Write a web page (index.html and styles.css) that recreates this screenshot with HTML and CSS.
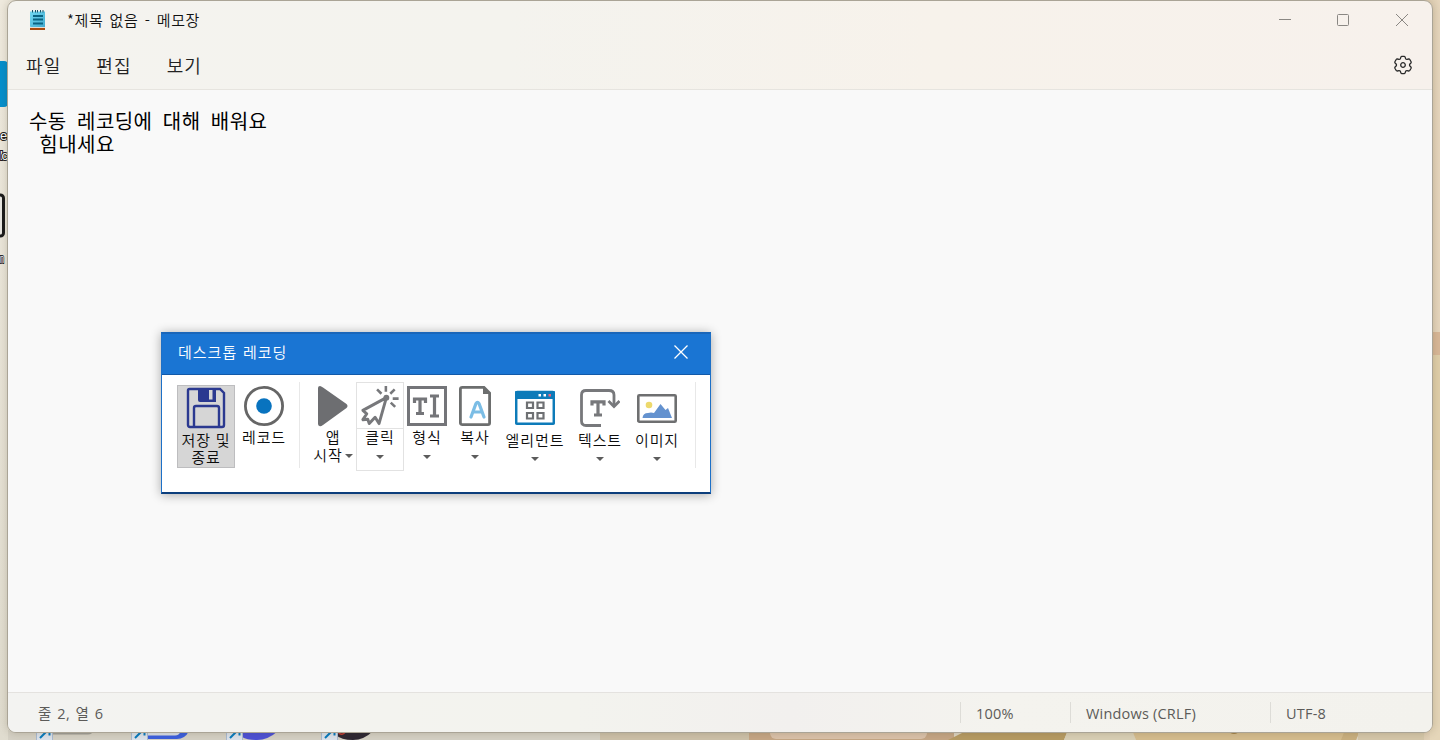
FILE: index.html
```html
<!DOCTYPE html>
<html lang="ko">
<head>
<meta charset="utf-8">
<title>메모장</title>
<link rel="stylesheet" href="styles.css">
</head>
<body>
<svg class="desktop" width="1440" height="740" viewBox="0 0 1440 740">
  <defs>
    <linearGradient id="left" x1="0" x2="0" y1="0" y2="1"><stop offset="0" stop-color="#efeade"/><stop offset="1" stop-color="#e0dccf"/></linearGradient>
    <linearGradient id="right" x1="0" x2="1" y1="0" y2="0"><stop offset="0" stop-color="#dccbb0"/><stop offset="1" stop-color="#e6d6bd"/></linearGradient>
  </defs>
  <rect width="20" height="740" fill="url(#left)"/>
  <rect x="1420" width="20" height="740" fill="url(#right)"/>
  <rect x="1430" y="332" width="10" height="23" fill="#d8b797"/>
  <rect x="1430" y="355" width="10" height="115" fill="#dfcea9"/>
  <rect x="1430" y="470" width="10" height="270" fill="#e5d6b9"/>
  <rect x="-20" y="61" width="28" height="46" rx="4" fill="#058fcd"/>
  <rect x="-20" y="195" width="23.500" height="41" rx="3" fill="#e9e7e2" stroke="#1b1b1b" stroke-width="3"/>
  <g class="desk-label"><text x="0" y="140">e</text><text x="0" y="160" textLength="8">lc</text><text x="0" y="263" textLength="4" lengthAdjust="spacingAndGlyphs">n</text></g>
  <rect x="8" y="730" width="592" height="10" fill="#d5d1c5"/>
  <rect x="600" y="730" width="149" height="10" fill="#cdc1a9"/>
  <rect x="749" y="730" width="205" height="10" fill="#c5a685"/>
  <rect x="770" y="715" width="157" height="24" rx="6" fill="#dac2aa"/>
  <path d="M948 740L968 730H1068L1064 740Z" fill="#b69b63"/>
  <path d="M1064 740L1068 730H1132L1136 740Z" fill="#d9d0b6"/>
  <path d="M1136 740L1132 730H1360L1356 740Z" fill="#d5bd8f"/>
  <path d="M1341 740L1345 730H1360L1356 740Z" fill="#c9b080"/>
  <rect x="1358" y="730" width="66" height="10" fill="#d5c7aa"/>
  <ellipse cx="1234" cy="731" rx="5" ry="3" fill="#a4834a"/>
  <path d="M52 731H93Q92 734.500 88 734.500H52Z" fill="#a19f98"/>
  <path d="M146 731H189Q185 739 177 739H146Z" fill="#3b5fde"/><path d="M146 731H181Q179 735.500 175 735.500H146Z" fill="#dbe0e8"/>
  <path d="M242 731H278Q268 740 257 740Q247 740 242 737Z" fill="#4d51d6"/>
  <path d="M336 731H373Q364 740 353 740Q341 740 336 735Z" fill="#2d2733"/><path d="M338 732Q342 737 346 731" fill="none" stroke="#c33b32" stroke-width="1.500"/>
  <g fill="#dce3ec" stroke="#a9bad2"><path d="M36.500 730H52.500V740.500H36.500zM131.500 730H147.500V740.500H131.500zM226.500 730H242.500V740.500H226.500zM321.500 730H337.500V740.500H321.500z"/></g>
  <g fill="none" stroke="#087bbf" stroke-width="2"><path d="M40 738L49 729M49.500 729V735.500M135 738L144 729M144.500 729V735.500M230 738L239 729M239.500 729V735.500M325 738L334 729M334.500 729V735.500"/></g>
</svg>

<main class="notepad">
  <header class="titlebar">
    <svg class="app-icon" width="16" height="21" viewBox="0 0 16 21">
      <defs><linearGradient id="pad" x1="0" x2="1" y1="0" y2="1"><stop stop-color="#72daf3"/><stop offset="1" stop-color="#43abd0"/></linearGradient></defs>
      <rect y="17" width="15" height="3" rx=".5" fill="#a94b10"/>
      <rect y="16.500" width="15" height="1.500" fill="#e6dcd2"/>
      <path d="M0 1.500H15V17H1Q0 17 0 16Z" fill="url(#pad)"/>
      <path d="M2.500 0V2.500M5.500 0V2.500M7.500 0V2.500M10.500 0V2.500M13 0V2.500" stroke="#17546a"/>
      <path d="M3 6H13M3 9.500H13M3 13.500H13" stroke="#0b6483" stroke-width="1.800"/>
    </svg>
    <span class="title">*제목 없음 - 메모장</span>
    <svg class="controls" width="130" height="14" viewBox="0 0 130 14" fill="none" stroke="#8a8783">
      <path d="M0 6.500H12"/><rect x="58.500" y="1.500" width="11" height="11" rx="1"/><path d="M117 1L129 13M129 1L117 13"/>
    </svg>
  </header>
  <nav class="menu">
    <span>파일</span><span>편집</span><span>보기</span>
    <svg class="gear" width="20" height="20" viewBox="-10 -10 20 20" fill="none" stroke="#2b2b2b" stroke-width="1.300" stroke-linejoin="round">
      <path d="M-2.700-6.200L-2.100-7.900Q-2-8.500-1.300-8.600H1.300Q2-8.500 2.100-7.900L2.700-6.200Q3.200-5.600 4-5.700L5.700-6Q6.400-6.100 6.800-5.500L8.100-3.200Q8.400-2.600 7.900-2L6.700-.7Q6.300 0 6.700.7L7.900 2Q8.400 2.600 8.100 3.200L6.800 5.500Q6.400 6.100 5.700 6L4 5.700Q3.200 5.600 2.700 6.200L2.100 7.900Q2 8.500 1.300 8.600H-1.300Q-2 8.500-2.100 7.900L-2.700 6.200Q-3.200 5.600-4 5.700L-5.700 6Q-6.400 6.100-6.800 5.500L-8.100 3.200Q-8.400 2.600-7.900 2L-6.700.7Q-6.300 0-6.700-.7L-7.900-2Q-8.400-2.600-8.100-3.200L-6.800-5.500Q-6.400-6.100-5.700-6L-4-5.700Q-3.200-5.600-2.700-6.200Z"/><circle r="2.300"/>
    </svg>
  </nav>
  <div class="editor">수동 레코딩에 대해 배워요
 힘내세요</div>
  <footer class="status">
    <span class="position">줄 2, 열 6</span>
    <span class="cell zoom">100%</span><span class="cell eol">Windows (CRLF)</span><span class="cell enc">UTF-8</span>
  </footer>
</main>

<section class="recorder">
  <header class="rec-head"><span>데스크톱 레코딩</span>
    <svg width="16" height="16" viewBox="0 0 16 16" fill="none" stroke="#fff" stroke-width="1.300"><path d="M1.500 1.500L14.500 14.500M14.500 1.500L1.500 14.500"/></svg>
  </header>
  <div class="tools">
    <div class="tool save">
      <svg width="40" height="42" viewBox="0 0 40 42" fill="none" stroke="#2b3990" stroke-width="2.400">
        <path d="M3.500 2H34L38 6V38Q38 40 36 40H4Q2 40 2 38V3.500Q2 2 3.500 2Z"/><path d="M12 1H30V15H14Q12 15 12 13Z" fill="#2b3990" stroke="none"/><rect x="23" y="3" width="3.500" height="9.500" fill="#d6d6d6" stroke="none"/><path d="M8 40V21Q8 19 10 19H31Q33 19 33 21V40"/>
      </svg>
      <span>저장 및<br>종료</span>
    </div>
    <div class="tool rec">
      <svg width="40" height="46" viewBox="0 0 40 46"><circle cx="20" cy="24" r="18.600" fill="#fff" stroke="#666" stroke-width="2.800"/><circle cx="20" cy="24" r="7.800" fill="#0873bf"/></svg>
      <span>레코드</span>
    </div>
    <i class="sep"></i>
    <div class="tool app">
      <svg width="32" height="46" viewBox="0 0 32 46"><path d="M3 4Q4 4 6 5.500L29.500 22Q31.500 24 29.500 26L6 43Q4 44.500 3 44.300Q1 44 1 42V6Q1 4 3 4Z" fill="#6d6e71"/></svg>
      <span>앱</span><span class="last">시작<i class="arrow"></i></span>
    </div>
    <div class="tool click">
      <svg width="46" height="47" viewBox="0 0 46 47" fill="none" stroke="#77787b" stroke-width="3">
        <path d="M29.500 16L5.500 29L9.500 32.500L5.500 38.500L10.500 38L12 42.500L18 36L22 42.500Z" stroke-linejoin="round"/><circle cx="29.500" cy="16" r="3" fill="#77787b" stroke="none"/><path d="M29 4V10M20 7.500L24.500 12M38 7.500L33.500 12M36 17H42M34 21L38.500 25.500" stroke-width="2.600"/>
      </svg>
      <span>클릭</span><i class="arrow"></i>
    </div>
    <div class="tool type">
      <svg width="40" height="46" viewBox="0 0 40 46" fill="none" stroke="#747579" stroke-width="3"><rect x="1.500" y="5.500" width="37" height="37"/><path d="M7.500 21V17H18.500V21M13 16V32M9 31.500H17M23 14H32M27.500 14V34M23 34H32" stroke-width="3.200"/></svg>
      <span>형식</span><i class="arrow"></i>
    </div>
    <div class="tool copy">
      <svg width="32" height="46" viewBox="0 0 32 46" fill="none" stroke="#6c6e6e" stroke-width="2.800"><path d="M3.500 5.400H25L30.600 11V41Q30.600 42.600 29 42.600H3.500Q1.400 42.600 1.400 41V7Q1.400 5.400 3.500 5.400Z"/><path d="M24 5V12H31Z" fill="#6c6e6e" stroke="none"/><path d="M12 35L17 21.500Q18.500 19 20 21.500L25 35M14 30H23" stroke="#7bbde5" stroke-width="3.200" stroke-linecap="round"/></svg>
      <span>복사</span><i class="arrow"></i>
    </div>
    <div class="tool element">
      <svg width="40" height="49" viewBox="0 0 40 49"><rect x="1.200" y="10" width="37.600" height="31.800" rx="1" fill="#fff" stroke="#0d7bb9" stroke-width="2.500"/><path d="M0 10Q0 9 1 9H39Q40 9 40 10V17H0Z" fill="#0d7bb9"/><path d="M23.500 12H26V14.500H23.500zM28.500 12H31V14.500H28.500z" fill="#fff"/><path d="M33.500 12H36V14.500H33.500z" fill="#ee637c"/><g fill="none" stroke="#6e7073" stroke-width="2.200"><path d="M12 20.500H18V26H12zM22.500 20.500H28.500V26H22.500zM12 31H18V36.500H12zM22.500 31H28.500V36.500H22.500z"/></g></svg>
      <span>엘리먼트</span><i class="arrow"></i>
    </div>
    <div class="tool text">
      <svg width="40" height="49" viewBox="0 0 40 49" fill="none" stroke="#77787b" stroke-width="2.800"><path d="M21 43.500H6Q1.500 43.500 1.500 39V13Q1.500 8.500 6 8.500H29Q34 8.500 34 13V23"/><path d="M28.500 19L34 24.500L39.500 19"/><path d="M12 23.500V19.800H24V23.500M18 19V33M14 33H22" stroke-width="3.200"/></svg>
      <span>텍스트</span><i class="arrow"></i>
    </div>
    <div class="tool image">
      <svg width="40" height="49" viewBox="0 0 40 49"><rect x="1.300" y="13.300" width="37.400" height="26.400" rx="1" fill="#fff" stroke="#6e6f70" stroke-width="2.600"/><circle cx="12" cy="23" r="3.300" fill="#edd96c"/><path d="M5.500 36Q6 31 11 31L14 30.500L17 31L23.500 22L28.500 28L31 26L35 36Z" fill="#6492cf"/></svg>
      <span>이미지</span><i class="arrow"></i>
    </div>
    <i class="sep end"></i>
  </div>
</section>
</body>
</html>
```
FILE: styles.css
```css
* { box-sizing: border-box; }
body { margin: 0; width: 1440px; height: 740px; overflow: hidden; position: relative; background: #ded6c4; font-family: "Noto Sans CJK KR", sans-serif; font-weight: 350; }
svg { display: block; flex: none; }
.desktop { position: absolute; left: 0; top: 0; }
.desk-label { font: 13px "Liberation Sans", "Noto Sans CJK KR", sans-serif; fill: #fff; stroke: #222; stroke-width: 2px; paint-order: stroke; }

.notepad { position: absolute; left: 7px; top: 0; width: 1426px; height: 733px; display: flex; flex-direction: column; border: 1px solid #aaa496; border-radius: 9px; overflow: hidden; background: linear-gradient(90deg, #f4f3ef, #f4f3ee 35%, #f7f2eb 65%, #f7f1ec); box-shadow: 0 0 9px rgba(70, 55, 25, .22); }
.titlebar { display: flex; align-items: center; height: 38px; padding: 0 23px 0 22px; }
.title { margin-left: 21px; margin-bottom: 1px; font-size: 15px; line-height: 22px; letter-spacing: .6px; word-spacing: 1.500px; color: #111; }
.controls { margin-left: auto; margin-bottom: 1px; }
.menu { display: flex; align-items: center; height: 50px; padding: 0 19px 0 18px; gap: 35px; font-size: 18px; line-height: 26px; letter-spacing: 1.100px; color: #222; }
.menu span { margin-top: 1px; }
.gear { margin-left: auto; margin-top: 2px; }
.editor { flex: 1; padding: 19px 21px; border-top: 1px solid #e6e4df; border-bottom: 1px solid #e4e2df; background: #f9f9f9; font-size: 20px; font-weight: 400; line-height: 23px; letter-spacing: .45px; word-spacing: 4.300px; white-space: pre; color: #000; }
.status { display: flex; align-items: center; height: 39px; padding-left: 30px; background: linear-gradient(90deg, #f3f3f1, #f3f3ee 40%, #f2f0ee 55%, #f4f3ee 70%, #f3f2ed); color: #5c5b59; font: 14.500px "Open Sans", "Noto Sans CJK KR", sans-serif; }
.position { flex: 1; letter-spacing: .4px; word-spacing: 1.300px; }
.cell { height: 21px; line-height: 23px; padding-left: 15px; border-left: 1px solid #dddcd7; letter-spacing: .2px; }
.zoom { width: 110px; }
.eol { width: 200px; }
.enc { width: 162px; }

.recorder { position: absolute; left: 161px; top: 332px; width: 550px; height: 162px; border: 1px solid #1d70c7; border-top: 2px solid #1a66b9; border-bottom: 2px solid #0c3e7c; background: #fff; box-shadow: 0 1px 10px rgba(0, 0, 0, .32); }
.rec-head { display: flex; align-items: center; justify-content: space-between; height: 41px; padding: 0 21px 4px 16px; border-bottom: 1px solid #1259a8; background: #1a75d3; color: #fff; font-size: 15px; line-height: 20px; letter-spacing: 1px; word-spacing: .5px; }
.tools { display: flex; align-items: flex-start; padding: 7px 0 0 15px; color: #0c0c0c; font-size: 15px; line-height: 18px; letter-spacing: .9px; }
.tool { display: flex; flex-direction: column; align-items: center; white-space: nowrap; text-align: center; }
.save { width: 58px; height: 83px; margin-top: 3px; padding-top: 1px; border: 1px solid #bdbdbf; background: #d6d6d6; line-height: 17px; letter-spacing: .8px; }
.save span { margin-top: 2px; }
.rec { width: 44px; margin-left: 7px; }
.sep { width: 1px; height: 86px; margin-left: 13px; background: #e8e8e8; }
.app { width: 42px; margin-left: 12px; }
.last { display: flex; align-items: center; gap: 2px; }
.arrow { width: 0; height: 0; margin-top: 9px; border: 4px solid transparent; border-top-color: #5c5c5c; border-bottom: 0; }
.last .arrow { margin-top: 2px; }
.click { width: 48px; height: 89px; margin-left: 2px; border: 1px solid #e2e2e2; }
.click svg { margin-top: -1px; border-bottom: 1px solid #e2e2e2; }
.click span { margin-top: -1px; }
.type { width: 44px; margin-left: 1px; }
.copy { width: 44px; margin-left: 4px; }
.element { width: 60px; margin-left: 8px; }
.text { width: 46px; margin-left: 12px; }
.image { width: 46px; margin-left: 11px; }
.end { margin-left: 15px; }
.element .arrow, .text .arrow, .image .arrow { margin-top: 8px; }
```
